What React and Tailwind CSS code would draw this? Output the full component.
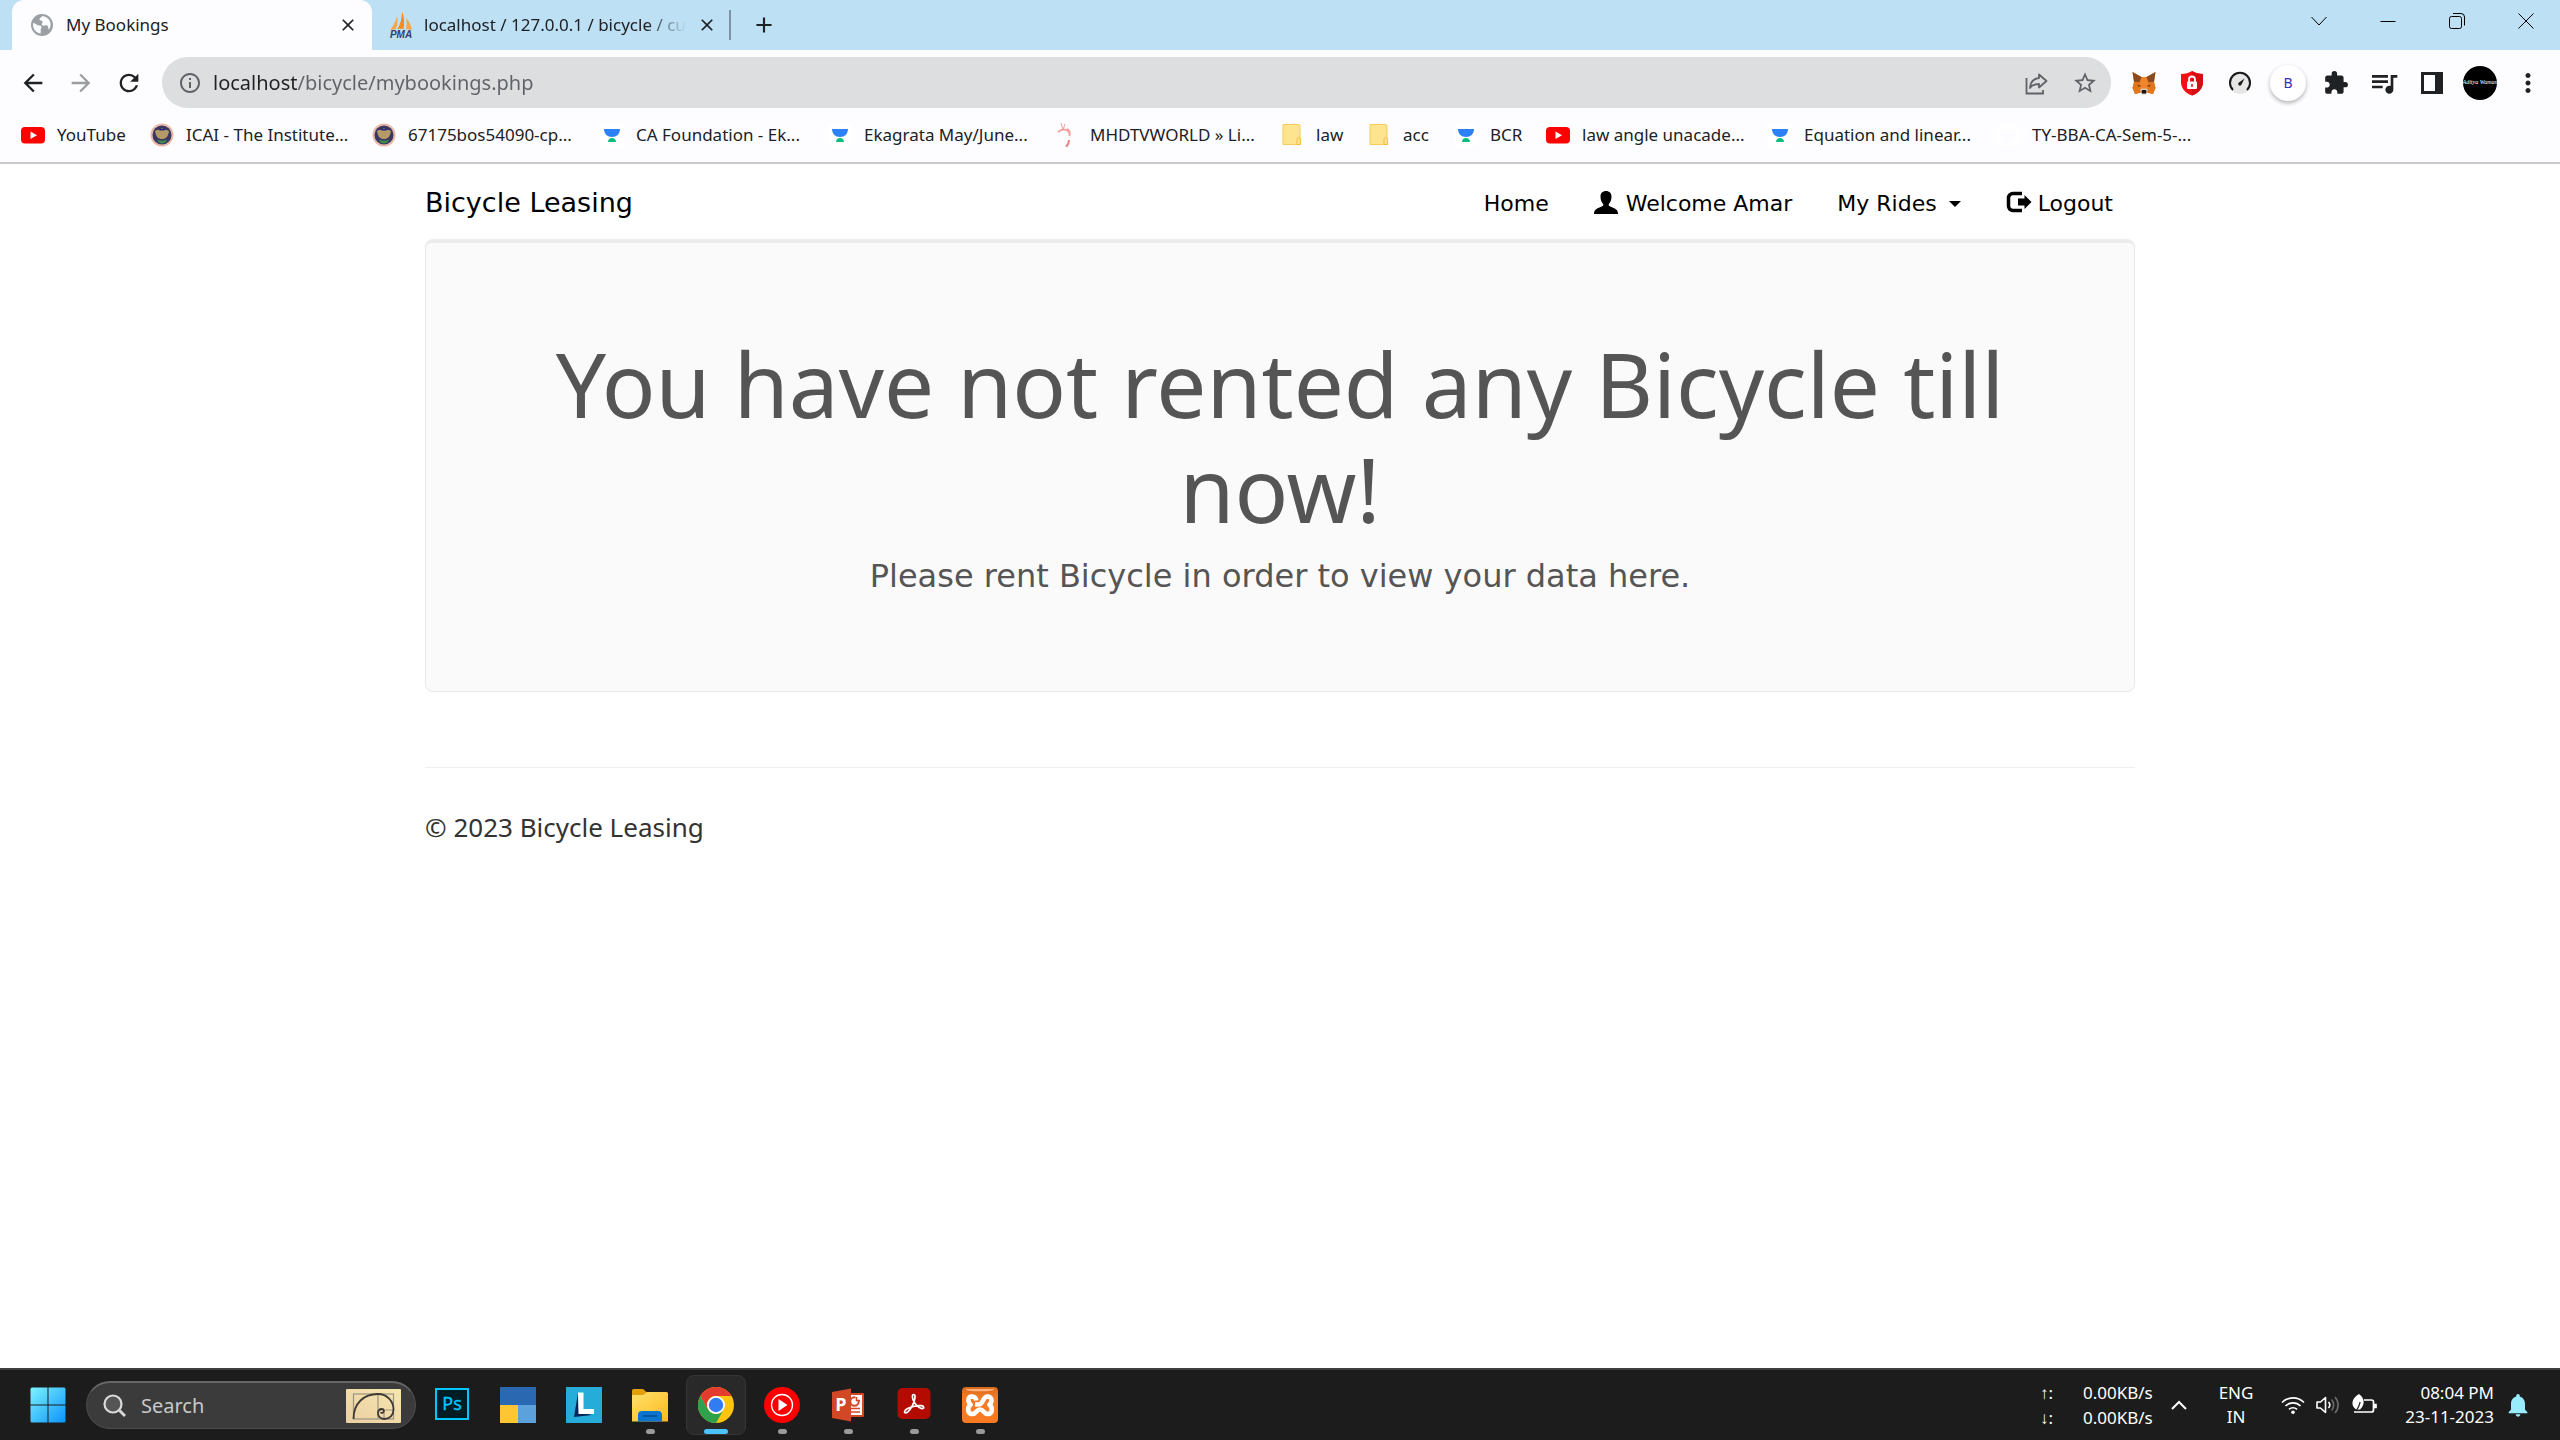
import React from "react";
import {
  MdArrowBack,
  MdArrowForward,
  MdRefresh,
  MdInfoOutline,
  MdStarBorder,
  MdExtension,
  MdQueueMusic,
  MdClose,
  MdAdd,
  MdMoreVert,
  MdNotifications,
} from "react-icons/md";

/* ---------- browser icons ---------- */

function GlobeIcon() {
  return (
    <svg viewBox="0 0 24 24" className="size-6 shrink-0" aria-hidden="true">
      <circle cx="12" cy="12" r="11" fill="#9aa0a6" />
      <path d="M3 10c3 .5 4 2.500 6.500 2.500 2 0 2.500 1.500 1.500 3-.8 1.300.3 2.500-.5 5C5.500 20 2.500 15 3 10z" fill="#fdfdff" />
      <path d="M12.500 3c-1 1.500-3 1.500-3 3.200 0 1.800 2.500.8 3 2.300.5 1.600-1.500 2.300-.5 3.500 1.500 1.700 4-.5 5.500.8 1.300 1.200.5 3.200 1.300 4C22.500 12 20.500 4 12.500 3z" fill="#fdfdff" />
    </svg>
  );
}

function PmaIcon() {
  return (
    <svg viewBox="0 0 26 26" className="size-[26px] shrink-0" aria-hidden="true">
      <path d="M9 4c1 4 .5 9-1 13-2 .2-4 .5-6 1.500C5 14 8 9 9 4z" fill="#f7a64a" />
      <path d="M14 0c2.500 5 2.500 12 1.500 17-2-.5-4-.5-6 0C12.500 12 14 6 14 0z" fill="#f68b1f" />
      <path d="M18 6c3.500 3.500 5.500 8 6 12-2-.8-4-1-6-.8.8-3.500.8-7.500 0-11.200z" fill="#f7a64a" />
      <text x="13" y="25.500" textAnchor="middle" fontSize="10" fontWeight="700" fontStyle="italic" fontFamily="Liberation Sans, sans-serif" fill="#3b3b6d">
        PMA
      </text>
    </svg>
  );
}

function YouTubeIcon() {
  return (
    <svg viewBox="0 0 24 24" className="size-6 shrink-0" aria-hidden="true">
      <rect x="0" y="4" width="24" height="16.500" rx="4" fill="#f00" />
      <path d="M9.500 8.500l6.500 3.700-6.500 3.800z" fill="#fff" />
    </svg>
  );
}

function SealIcon() {
  return (
    <svg viewBox="0 0 24 24" className="size-6 shrink-0" aria-hidden="true">
      <circle cx="12" cy="12" r="11.500" fill="#e9b9a8" />
      <circle cx="12" cy="12" r="9.500" fill="#3a3763" />
      <path d="M5 8c3-2 4 0 7-3 3 3 4 1 7 3-1 6-3 8-7 8S6 14 5 8z" fill="#b49a66" />
      <path d="M9.500 4.500c1 2 4 2 5 0v3h-5z" fill="#26257a" />
      <path d="M7 16.500c2 1.500 8 1.500 10 0-1 3-3 4-5 4s-4-1-5-4z" fill="#3c8a4c" />
    </svg>
  );
}

function GobletIcon() {
  return (
    <svg viewBox="0 0 24 24" className="size-6 shrink-0" aria-hidden="true">
      <rect width="24" height="24" rx="4" fill="#fff" />
      <path d="M4 6h16c0 5-3.500 8-8 8s-8-3-8-8z" fill="#2d81f7" />
      <path d="M8 19c0-2.500 1.800-4 4-4s4 1.500 4 4z" fill="#08bd80" />
    </svg>
  );
}

function SquiggleIcon() {
  return (
    <svg viewBox="0 0 24 24" className="size-6 shrink-0" fill="none" stroke="#f2a0a0" aria-hidden="true">
      <path d="M7 0l2 7M11 1L9 7" strokeWidth="1" />
      <path d="M4 9c5-4 10-3 12 2M13 6c2 1 3 4 2.500 7" strokeWidth="2" />
      <path d="M15 17c0 3-1 5-3 7" stroke="#ee8181" strokeWidth="2" />
    </svg>
  );
}

function FolderIcon() {
  return (
    <svg viewBox="0 0 24 24" className="size-6 shrink-0" aria-hidden="true">
      <path d="M3 1.500h15.500a1.500 1.500 0 0 1 1.500 1.500v18.500H3z" fill="#ffe48f" stroke="#f3cd55" />
      <path d="M17 21.500v-5a1.800 1.800 0 0 1 3.600 0v5z" fill="#ffe48f" stroke="#eebf3c" />
    </svg>
  );
}

function GithubIcon() {
  return (
    <svg viewBox="0 0 24 24" className="size-6 shrink-0" aria-hidden="true">
      <path
        fill="#fff"
        d="M12 .5a12 12 0 0 0-3.800 23.400c.6.100.8-.3.800-.6v-2.200c-3.300.7-4-1.400-4-1.400-.6-1.400-1.400-1.800-1.400-1.800-1-.7.100-.7.100-.7 1.200.1 1.900 1.200 1.900 1.200 1 1.800 2.800 1.300 3.500 1 .1-.8.400-1.300.8-1.600-2.700-.3-5.500-1.300-5.500-5.900 0-1.300.5-2.400 1.200-3.200 0-.4-.5-1.600.2-3.200 0 0 1-.3 3.300 1.200a11.500 11.500 0 0 1 6 0c2.300-1.500 3.300-1.200 3.300-1.200.7 1.600.2 2.800.1 3.200.8.800 1.200 1.900 1.200 3.200 0 4.600-2.800 5.600-5.500 5.900.5.400.9 1.100.9 2.200v3.300c0 .3.200.7.800.6A12 12 0 0 0 12 .5z"
      />
    </svg>
  );
}

function ShareIcon() {
  return (
    <svg viewBox="0 0 24 24" className="size-6" fill="none" stroke="#5f6368" strokeWidth="1.800" aria-hidden="true">
      <path d="M1.500 7v15.500H18V19" />
      <path d="M14 3.500l7.500 6.500L14 16.500V13c-4 0-7 1-9 4 .5-5.500 3.500-9.500 9-10z" strokeLinejoin="round" />
    </svg>
  );
}

function FoxIcon() {
  return (
    <svg viewBox="0 0 26 26" className="size-[26px]" aria-hidden="true">
      <path d="M1.500 2l9 5h5l9-5-1.500 10 1.500 6-2.500 6-6-1.500-1.500 1.500h-3L10 22.500 4 24l-2.500-6L3 12z" fill="#f0842a" />
      <path d="M1.500 2l9 5-2 5.500L3 12z" fill="#8a4a20" />
      <path d="M24.500 2l-9 5 2 5.500 5.500-.5z" fill="#8a4a20" />
      <path d="M3 12l5.500.5L10 22.500 4 24l-2.500-6z" fill="#e2761b" />
      <path d="M23 12l-5.500.5-1.500 10 6 1.500 2.500-6z" fill="#e2761b" />
      <path d="M6.500 14.500l4 1.500-3.200.8zM19.500 14.500l-4 1.500 3.200.8z" fill="#6b3a18" />
      <path d="M9 19.500l2-1h4l2 1-1 3.500-1.500 1.500h-3L10 23z" fill="#d9c3b0" />
      <path d="M10.500 21l1-1h3l1 1-.5 2.500h-4z" fill="#161616" />
    </svg>
  );
}

function ShieldIcon() {
  return (
    <svg viewBox="0 0 24 26" className="h-[26px] w-6" aria-hidden="true">
      <path d="M12 1c3 2 7 3 11 3v8c0 6-4 11-11 13.500C5 23 1 18 1 12V4c4 0 8-1 11-3z" fill="#f31017" />
      <path d="M12 1c3 2 7 3 11 3v8c0 6-4 11-11 13.500z" fill="#d80d14" />
      <rect x="7" y="11.500" width="10" height="7.500" rx="1" fill="#fff" />
      <path d="M9 12V9.500a3 3 0 0 1 6 0V12" fill="none" stroke="#fff" strokeWidth="1.800" />
      <path d="M12 14v3" stroke="#e01017" strokeWidth="1.500" />
    </svg>
  );
}

function GaugeIcon() {
  return (
    <svg viewBox="0 0 24 24" className="size-6" aria-hidden="true">
      <circle cx="12" cy="12" r="11" fill="#e6e6e4" />
      <path d="M5 19a10 10 0 1 1 14 0" fill="none" stroke="#1a1a1a" strokeWidth="2" />
      <path d="M16.500 7.500l-3 6a1.700 1.700 0 1 1-2.500-2z" fill="#1a1a1a" />
    </svg>
  );
}

function SidePanelIcon() {
  return (
    <svg viewBox="0 0 22 22" className="size-[22px]" aria-hidden="true">
      <rect x="1.500" y="1.500" width="19" height="19" fill="none" stroke="#202124" strokeWidth="3" />
      <rect x="14" y="2" width="6.500" height="18" fill="#202124" />
    </svg>
  );
}

/* ---------- page icons ---------- */

function UserIcon() {
  return (
    <svg viewBox="0 0 24 24" className="mb-1 h-6 w-6 shrink-0" fill="currentColor" aria-hidden="true">
      <path d="M12 1c3.500 0 5.500 2.300 5.500 5.500 0 3.500-1.200 6-2.700 7.500v1.800c1.200.8 6.200 2.500 7.700 4 .9.900 1.500 2.200 1.500 4.200H0c0-2 .6-3.300 1.500-4.200 1.500-1.500 6.500-3.200 7.700-4V14C7.700 12.500 6.500 10 6.500 6.500 6.500 3.300 8.500 1 12 1z" />
    </svg>
  );
}

function LogoutIcon() {
  return (
    <svg viewBox="0 0 26 24" className="mb-1 h-6 w-[26px] shrink-0" aria-hidden="true">
      <path d="M16 3.500H7A4.500 4.500 0 0 0 2.500 8v8A4.500 4.500 0 0 0 7 20.500h9" fill="none" stroke="currentColor" strokeWidth="3.500" />
      <path d="M12 8.500h6.500V5l7 7-7 7v-3.500H12z" fill="currentColor" />
    </svg>
  );
}

/* ---------- taskbar icons ---------- */

function WindowsIcon() {
  return (
    <svg viewBox="0 0 36 36" className="size-9" aria-hidden="true">
      <defs>
        <linearGradient id="win" x1="0" y1="0" x2="1" y2="1">
          <stop offset="0" stopColor="#7df3ff" />
          <stop offset="1" stopColor="#0a93fb" />
        </linearGradient>
      </defs>
      <path fill="url(#win)" d="M2 .5h15.500V17.500H.5V2A1.500 1.500 0 0 1 2 .5zM18.500.5H34A1.500 1.500 0 0 1 35.500 2v15.500h-17zM.5 18.500h17v17H2A1.500 1.500 0 0 1 .5 34zM18.500 18.500h17V34a1.500 1.500 0 0 1-1.500 1.500H18.500z" />
    </svg>
  );
}

function MagnifierIcon() {
  return (
    <svg viewBox="0 0 24 24" className="size-6 shrink-0" fill="none" stroke="#dadada" aria-hidden="true">
      <circle cx="10" cy="10" r="8.500" strokeWidth="2.200" fill="#555" />
      <path d="M16.500 16.500l5.500 5.500" strokeWidth="2.800" />
    </svg>
  );
}

function SpiralCard() {
  return (
    <svg viewBox="0 0 55 34" className="h-[34px] w-[55px] shrink-0" aria-hidden="true">
      <defs>
        <linearGradient id="gold" x1="0" y1="1" x2="1" y2="0">
          <stop offset="0" stopColor="#ebcfa4" />
          <stop offset="1" stopColor="#f7e6ae" />
        </linearGradient>
      </defs>
      <rect width="55" height="34" rx="1" fill="url(#gold)" />
      <g fill="none" stroke="#9c9482" strokeWidth="1.200">
        <rect x="7.500" y="5" width="40" height="25" />
        <path d="M32 5v25M32 21h15.500M38 21v9" />
      </g>
      <path d="M7.500 30C7.500 14 18 5 32 5c9 0 15.500 7 15.500 15.500 0 5.500-4 9.500-9 9.500-3.500 0-6.500-2.500-6.500-5.500s2-4.500 4-4.500 2.500 2.500 1 3.500-2 .2-2-.6" fill="none" stroke="#3d3a35" strokeWidth="1.800" />
    </svg>
  );
}

function PhotoshopIcon() {
  return (
    <svg viewBox="0 0 36 36" className="size-9" aria-hidden="true">
      <rect x="2" y="2" width="32" height="30" fill="#001d26" stroke="#00c8ff" strokeWidth="2" />
      <text x="18" y="22.500" textAnchor="middle" fontSize="18" fontFamily="Open Sans, sans-serif" fill="#00c8ff" stroke="#00c8ff" strokeWidth="0.400">
        Ps
      </text>
    </svg>
  );
}

function TilesIcon() {
  return (
    <svg viewBox="0 0 36 36" className="size-9" aria-hidden="true">
      <rect width="36" height="18" fill="#2b68b2" />
      <rect y="18" width="18" height="18" fill="#fdc632" />
      <rect x="18" y="18" width="18" height="18" fill="#5ba2dc" />
    </svg>
  );
}

function LIcon() {
  return (
    <svg viewBox="0 0 36 36" className="size-9" aria-hidden="true">
      <rect width="36" height="36" fill="#25acd9" />
      <path d="M12 6L8 30l18-2-13-3z" fill="#04255a" />
      <path d="M12 5.500h5.500V22H28v5H12.500z" fill="#fff" />
    </svg>
  );
}

function ExplorerIcon() {
  return (
    <svg viewBox="0 0 36 36" className="size-9" aria-hidden="true">
      <defs>
        <linearGradient id="fold" x1="0" y1="0" x2="1" y2="1">
          <stop offset="0" stopColor="#ffdf6e" />
          <stop offset="1" stopColor="#fcbc1c" />
        </linearGradient>
      </defs>
      <path d="M0 9V3.500A1.500 1.500 0 0 1 1.500 2H11l4 3.500V9z" fill="#e2a10a" />
      <path d="M0 8h11l4-3h19.500A1.500 1.500 0 0 1 36 6.500V34.500H0z" fill="url(#fold)" />
      <path d="M6 34.500V28a4 4 0 0 1 4-4h16a4 4 0 0 1 4 4v6.500z" fill="#0b74cf" />
      <path d="M11 29h14" stroke="#064b93" strokeWidth="1.500" />
    </svg>
  );
}

function ChromeIcon() {
  return (
    <svg viewBox="0 0 36 36" className="size-9" aria-hidden="true">
      <circle cx="18" cy="18" r="18" fill="#ffc40f" />
      <path d="M2.400 9A18 18 0 0 0 18 36l7.800-13.500A9 9 0 0 1 10.200 22.500z" fill="#2da14c" />
      <path d="M2.400 9a18 18 0 0 1 31.200 0H18a9 9 0 0 0-7.800 13.500z" fill="#e33b2e" />
      <circle cx="18" cy="18" r="9" fill="#fff" />
      <circle cx="18" cy="18" r="7.200" fill="#2f7df0" />
    </svg>
  );
}

function YtMusicIcon() {
  return (
    <svg viewBox="0 0 36 36" className="size-9" aria-hidden="true">
      <circle cx="18" cy="18" r="18" fill="#f00" />
      <circle cx="18" cy="18" r="10.500" fill="none" stroke="#fff" strokeWidth="1.300" />
      <path d="M14.500 12l9 6-9 6z" fill="#fff" />
    </svg>
  );
}

function PowerPointIcon() {
  return (
    <svg viewBox="0 0 36 36" className="size-9" aria-hidden="true">
      <rect x="16" y="6" width="18" height="24" rx="1" fill="#d24726" />
      <rect x="18" y="8" width="14" height="20" fill="#fff" />
      <circle cx="24.500" cy="14.500" r="4.200" fill="none" stroke="#d24726" strokeWidth="2" />
      <path d="M25.500 9v5h6V9z" fill="#fff" />
      <path d="M26.500 10v3.500h3.500" fill="none" stroke="#d24726" strokeWidth="1.500" />
      <path d="M20 21.500h10M20 25h10" stroke="#d24726" strokeWidth="1.500" />
      <path d="M2 5l19-3.500v33L2 31z" fill="#d24726" />
      <text x="11" y="24" textAnchor="middle" fontSize="18" fontWeight="700" fontFamily="Open Sans, sans-serif" fill="#fff">
        P
      </text>
    </svg>
  );
}

function AcrobatIcon() {
  return (
    <svg viewBox="0 0 36 36" className="size-9" aria-hidden="true">
      <rect x="1.500" y="1" width="33" height="31" rx="5" fill="#b30b00" />
      <path d="M17.500 7.500c2.200 0 1.800 3.500.4 7.500-1.700 5-5.500 10.500-8 10.800-2.200.3-1.900-2.500 1.800-4.300 4-2 9.500-3.200 13.300-2.800 3.500.4 3.300 3.300.7 2.900-3-.5-7.200-4.200-8.700-9-.8-2.700-.9-5.100.5-5.100z" fill="none" stroke="#fff" strokeWidth="1.700" />
    </svg>
  );
}

function XamppIcon() {
  return (
    <svg viewBox="0 0 36 36" className="size-9" aria-hidden="true">
      <defs>
        <linearGradient id="xam" x1="0" y1="0" x2="0" y2="1">
          <stop offset="0" stopColor="#d96a1c" />
          <stop offset="0.300" stopColor="#f47b24" />
          <stop offset="1" stopColor="#fb7a22" />
        </linearGradient>
      </defs>
      <rect width="36" height="36" rx="4" fill="url(#xam)" />
      <path d="M4 2h28c0 2-5 2.200-14 2.200S4 4 4 2z" fill="#ffb27d" />
      <path
        d="M13 17.500h3.500c5 0 4-7.500 8.500-8 4.800-.3 6 5.200 2.300 8.200 4 2.800 3 9-1.300 9.300-4.500.2-4-4.500-8-4.500s-3.500 4.700-8 4.500c-4.300-.3-5.300-6.500-1.300-9.300C5 14.700 6 9.200 10 9.500c2.500.2 4 1.500 4.300 4"
        fill="none"
        stroke="#fff"
        strokeWidth="4.600"
        strokeLinejoin="round"
      />
    </svg>
  );
}

function WifiIcon() {
  return (
    <svg viewBox="0 0 24 20" className="h-5 w-6" fill="none" stroke="#fff" strokeWidth="1.600" aria-hidden="true">
      <path d="M1 7.500a15.500 15.500 0 0 1 22 0M4.500 11a10.600 10.600 0 0 1 15 0M8 14.300a5.800 5.800 0 0 1 8 0" />
      <circle cx="12" cy="17.300" r="1.800" fill="#fff" stroke="none" />
    </svg>
  );
}

function SpeakerIcon() {
  return (
    <svg viewBox="0 0 24 20" className="h-5 w-6" fill="none" stroke="#fff" strokeWidth="1.600" aria-hidden="true">
      <path d="M1 7h3.500L9.500 2.500v15L4.500 13H1z" strokeLinejoin="round" />
      <path d="M12.500 7a4.500 4.500 0 0 1 0 6" />
      <path d="M15.500 4.500a8 8 0 0 1 0 11M19 2a12 12 0 0 1 0 16" stroke="#6b6b6b" />
    </svg>
  );
}

function BatteryIcon() {
  return (
    <svg viewBox="0 0 26 22" className="h-[22px] w-[26px]" fill="none" stroke="#fff" strokeWidth="1.700" aria-hidden="true">
      <path d="M13 6h7.500a2 2 0 0 1 2 2v8a2 2 0 0 1-2 2H3" />
      <path d="M22.500 10.500H25v3h-2.500" fill="#fff" />
      <path d="M8 0c5.500 4 6.500 10 1 15.500H5C-1 11.500 1 4 8 0z" fill="#fff" stroke="none" />
      <path d="M9 8c0 3-2 6-4 9" stroke="#1d1d1d" strokeWidth="1.200" />
    </svg>
  );
}

/* ---------- data ---------- */

const bookmarks = [
  { label: "YouTube", Icon: YouTubeIcon, width: "w-[129px]" },
  { label: "ICAI - The Institute...", Icon: SealIcon, width: "w-[222px]" },
  { label: "67175bos54090-cp...", Icon: SealIcon, width: "w-[228px]" },
  { label: "CA Foundation - Ek...", Icon: GobletIcon, width: "w-[228px]" },
  { label: "Ekagrata May/June...", Icon: GobletIcon, width: "w-[226px]" },
  { label: "MHDTVWORLD » Li...", Icon: SquiggleIcon, width: "w-[226px]" },
  { label: "law", Icon: FolderIcon, width: "w-[87px]" },
  { label: "acc", Icon: FolderIcon, width: "w-[87px]" },
  { label: "BCR", Icon: GobletIcon, width: "w-[92px]" },
  { label: "law angle unacade...", Icon: YouTubeIcon, width: "w-[222px]" },
  { label: "Equation and linear...", Icon: GobletIcon, width: "w-[228px]" },
  { label: "TY-BBA-CA-Sem-5-...", Icon: GithubIcon, width: "w-[228px]" },
];

const extensions = [
  { label: "MetaMask", icon: <FoxIcon /> },
  { label: "Ad blocker", icon: <ShieldIcon /> },
  { label: "Speed test", icon: <GaugeIcon /> },
  {
    label: "B extension",
    icon: (
      <span className="flex size-9 items-center justify-center rounded-full bg-white text-sm text-[#3a2fb5] shadow-[0_2px_4px_rgba(0,0,0,0.3)]">
        B
      </span>
    ),
  },
  { label: "Extensions", icon: <MdExtension className="size-[26px]" /> },
  { label: "Media control", icon: <MdQueueMusic className="size-8" /> },
  { label: "Side panel", icon: <SidePanelIcon /> },
  {
    label: "Profile",
    icon: (
      <span className="flex size-[34px] items-center justify-center whitespace-nowrap rounded-full bg-black font-['Liberation_Serif',serif] text-[6px] italic text-white">
        Aditya Waman
      </span>
    ),
  },
];

const apps = [
  { label: "Photoshop", Icon: PhotoshopIcon },
  { label: "Tiles", Icon: TilesIcon },
  { label: "L", Icon: LIcon },
  { label: "File Explorer", Icon: ExplorerIcon, running: true },
  { label: "Google Chrome", Icon: ChromeIcon, active: true },
  { label: "YouTube Music", Icon: YtMusicIcon, running: true },
  { label: "PowerPoint", Icon: PowerPointIcon, running: true },
  { label: "Acrobat", Icon: AcrobatIcon, running: true },
  { label: "XAMPP", Icon: XamppIcon, running: true },
];

/* ---------- sections ---------- */

function TabStrip() {
  return (
    <div className="flex h-[50px] items-center bg-[#bde0f4] pl-3">
      <div className="flex w-[360px] items-center self-stretch rounded-t-xl bg-[#fdfdff] pl-[18px] pr-3">
        <GlobeIcon />
        <span className="ml-3 flex-1 text-[17px] text-[#202124]">My Bookings</span>
        <button aria-label="Close My Bookings" className="flex size-6 items-center justify-center text-[#202124]">
          <MdClose className="size-5" />
        </button>
      </div>
      <div className="flex w-[357px] items-center pl-4 pr-2.5">
        <PmaIcon />
        <span className="ml-2.5 whitespace-nowrap mask-r-from-85% text-[17px] text-[#202124]">
          localhost / 127.0.0.1 / bicycle / cu
        </span>
        <button aria-label="Close phpMyAdmin" className="ml-auto flex size-6 shrink-0 items-center justify-center text-[#202124]">
          <MdClose className="size-5" />
        </button>
      </div>
      <span className="h-[30px] w-0.5 bg-[#7d939f]" />
      <button aria-label="New tab" className="flex w-[66px] items-center justify-center text-[#202124]">
        <MdAdd className="size-[26px]" />
      </button>
      <div className="ml-auto flex h-[42px] self-start text-black">
        <button aria-label="Search tabs" className="flex w-[69px] items-center justify-center">
          <svg viewBox="0 0 16 16" className="size-4" fill="none" stroke="currentColor" aria-hidden="true">
            <path d="M.5 4L8 12l7.500-8" />
          </svg>
        </button>
        <button aria-label="Minimize" className="flex w-[69px] items-center justify-center">
          <svg viewBox="0 0 16 16" className="size-4" fill="none" stroke="currentColor" aria-hidden="true">
            <path d="M.5 8.500h15" />
          </svg>
        </button>
        <button aria-label="Restore" className="flex w-[69px] items-center justify-center">
          <svg viewBox="0 0 16 16" className="size-4" fill="none" stroke="currentColor" aria-hidden="true">
            <rect x=".5" y="3.500" width="12" height="12" rx="2" />
            <path d="M4 .5h8a3.500 3.500 0 0 1 3.500 3.500v8.500" />
          </svg>
        </button>
        <button aria-label="Close window" className="flex w-[69px] items-center justify-center">
          <svg viewBox="0 0 16 16" className="size-4" fill="none" stroke="currentColor" aria-hidden="true">
            <path d="M.5.5l15 15M15.500.5l-15 15" />
          </svg>
        </button>
      </div>
    </div>
  );
}

function Toolbar() {
  return (
    <div className="flex items-center bg-[#fdfdff] pl-[9px] pt-[7px] text-[#202124]">
      <button aria-label="Back" className="flex w-12 justify-center">
        <MdArrowBack className="size-7" />
      </button>
      <button aria-label="Forward" className="flex w-12 justify-center text-[#9b9da0]">
        <MdArrowForward className="size-7" />
      </button>
      <button aria-label="Reload" className="flex w-12 justify-center">
        <MdRefresh className="size-7" />
      </button>
      <div className="ml-[9px] flex h-[51px] flex-1 items-center rounded-full bg-[#dddee0] pl-4 pr-0.5 text-[#5f6368]">
        <button aria-label="Site information" className="flex w-[35px]">
          <MdInfoOutline className="size-6" />
        </button>
        <input
          aria-label="Address"
          defaultValue="localhost/bicycle/mybookings.php"
          className="flex-1 bg-linear-to-r from-[#202124] from-[84px] to-[#5f6368] to-[84px] bg-clip-text text-xl text-transparent caret-black outline-none"
        />
        <button aria-label="Share this page" className="flex w-12 justify-center">
          <ShareIcon />
        </button>
        <button aria-label="Bookmark this tab" className="flex w-12 justify-center">
          <MdStarBorder className="size-[26px]" />
        </button>
      </div>
      <div className="ml-[9px] flex items-center">
        {extensions.map((item) => (
          <button key={item.label} aria-label={item.label} className="flex w-12 items-center justify-center">
            {item.icon}
          </button>
        ))}
        <button aria-label="Menu" className="mr-2 flex w-12 items-center justify-center">
          <MdMoreVert className="size-[30px]" />
        </button>
      </div>
    </div>
  );
}

function BookmarksBar() {
  return (
    <nav aria-label="Bookmarks" className="flex h-14 items-center border-b-2 border-[#c8cacd] bg-[#fdfdff] pl-[21px]">
      {bookmarks.map(({ label, Icon, width }) => (
        <a key={label} href="#" className={`flex shrink-0 items-center gap-3 whitespace-nowrap text-[17px] text-[#202124] ${width}`}>
          <Icon />
          {label}
        </a>
      ))}
    </nav>
  );
}

function Page() {
  return (
    <main className="flex-1 bg-white">
      <div className="mx-auto w-full max-w-[1710px] font-['DejaVu_Sans',sans-serif]">
        <header className="flex h-[75px] items-center justify-between pt-1 text-black">
          <a href="#" className="text-[27px]">
            Bicycle Leasing
          </a>
          <nav className="flex items-center gap-[45px] pr-[22px] text-[22px]">
            <a href="#">Home</a>
            <a href="#" className="flex items-center gap-2">
              <UserIcon />
              Welcome Amar
            </a>
            <button className="flex items-center gap-3">
              My Rides
              <svg viewBox="0 0 12 6" className="h-1.5 w-3" aria-hidden="true">
                <path d="M0 0h12L6 6z" fill="currentColor" />
              </svg>
            </button>
            <a href="#" className="flex items-center gap-1.5">
              <LogoutIcon />
              Logout
            </a>
          </nav>
        </header>
        <section className="rounded-lg border border-t-4 border-[#e8e8e8] border-t-[#ececec] bg-[#fafafa] px-[90px] pb-[88px] pt-[88px] text-center text-[#555]">
          <h1 className="font-['Noto_Sans',sans-serif] text-[89px] leading-[105px]">You have not rented any Bicycle till now!</h1>
          <p className="mt-2 text-[32px] leading-[54px]">Please rent Bicycle in order to view your data here.</p>
        </section>
        <footer className="mt-[75px] border-t border-[#eee] pt-10 font-['Noto_Sans',sans-serif] text-[26px] text-[#333]">
          <p>© 2023 Bicycle Leasing</p>
        </footer>
      </div>
    </main>
  );
}

function Taskbar() {
  return (
    <footer className="flex h-[72px] items-center border-t-2 border-[#3f3f3f] bg-[#1c1c1c] pl-[30px] pr-7 text-white">
      <button aria-label="Start">
        <WindowsIcon />
      </button>
      <label className="ml-5 flex h-12 w-[330px] items-center gap-3.5 rounded-full border border-t-2 border-[#4c4c4c] border-t-[#666] bg-[#3b3b3b] pl-4 pr-3.5">
        <MagnifierIcon />
        <input aria-label="Search" placeholder="Search" className="min-w-0 flex-1 bg-transparent text-xl outline-none placeholder:text-[#c9c9c9]" />
        <SpiralCard />
      </label>
      <div className="ml-[3px] flex">
        {apps.map(({ label, Icon, running, active }) => (
          <button key={label} aria-label={label} className="flex w-[66px] justify-center">
            <span
              className={
                active
                  ? "relative flex size-[60px] items-center justify-center rounded-lg border border-[#353535] bg-[#292929]"
                  : "relative flex size-[60px] items-center justify-center"
              }
            >
              <Icon />
              {running && <span className="absolute bottom-px h-[5px] w-[9px] rounded-full bg-[#9a9a9a]" />}
              {active && <span className="absolute bottom-0 h-[5px] w-6 rounded-full bg-[#4cc2ff]" />}
            </span>
          </button>
        ))}
      </div>
      <div className="ml-auto flex items-center text-[17px] leading-6">
        <div className="grid grid-cols-[43px_72px] leading-[25px]">
          <span>↑:</span>
          <span>0.00KB/s</span>
          <span>↓:</span>
          <span>0.00KB/s</span>
        </div>
        <button aria-label="Show hidden icons" className="flex w-12 justify-center">
          <svg viewBox="0 0 16 10" className="h-2.5 w-4" fill="none" stroke="#fff" strokeWidth="2" aria-hidden="true">
            <path d="M1 9l7-7 7 7" />
          </svg>
        </button>
        <button className="w-[66px] text-center">
          ENG
          <br />
          IN
        </button>
        <button aria-label="Network, volume, battery" className="ml-3 flex w-24 items-center justify-between">
          <WifiIcon />
          <SpeakerIcon />
          <BatteryIcon />
        </button>
        <button className="ml-[22px] w-[95px] whitespace-nowrap text-right">
          08:04 PM
          <br />
          23-11-2023
        </button>
        <button aria-label="Notifications" className="ml-2.5 text-[#99ebff]">
          <MdNotifications className="size-7" />
        </button>
      </div>
    </footer>
  );
}

export default function App() {
  return (
    <div className="flex min-h-screen flex-col overflow-x-hidden bg-white font-['Noto_Sans','Open_Sans',sans-serif]">
      <TabStrip />
      <Toolbar />
      <BookmarksBar />
      <Page />
      <Taskbar />
    </div>
  );
}
